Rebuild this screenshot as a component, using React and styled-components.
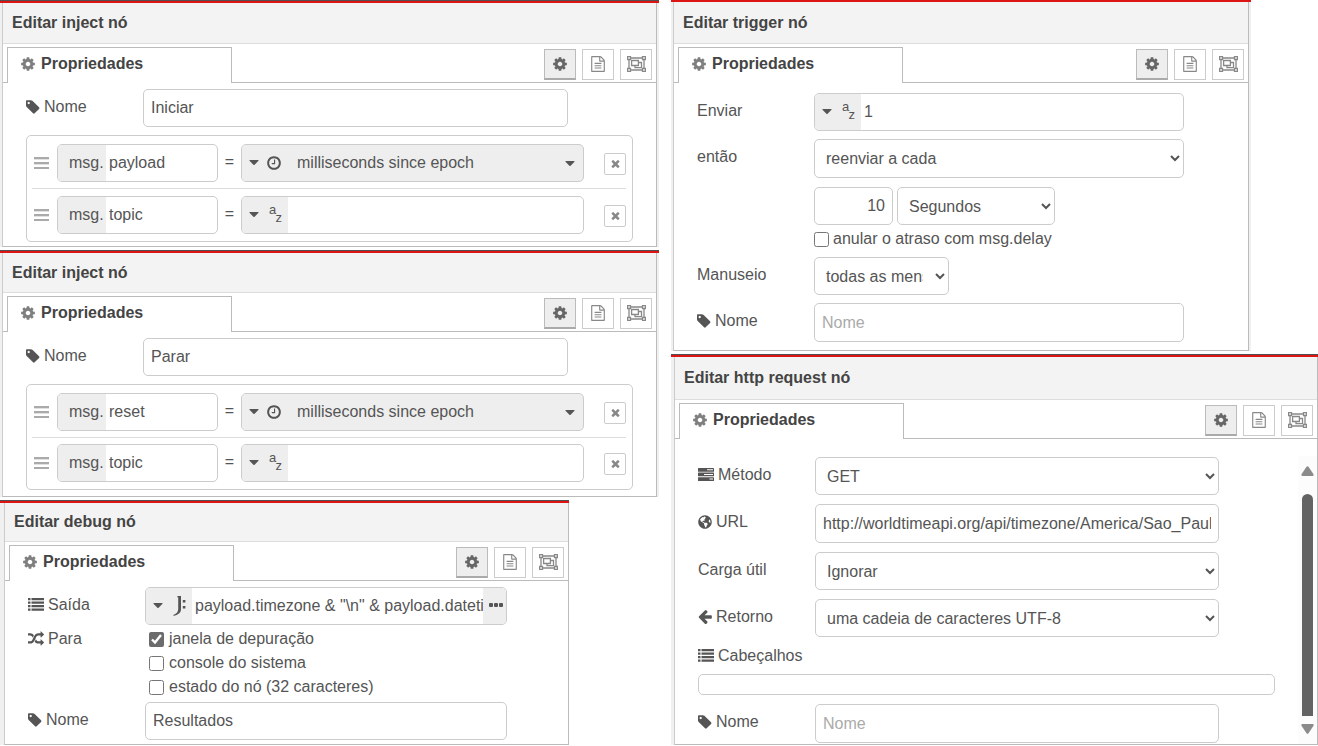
import React, { useId } from "react";
import styled, { createGlobalStyle } from "styled-components";
import { FaGlobeAmericas } from "react-icons/fa";

const GlobalStyle = createGlobalStyle`
  *, *::before, *::after { box-sizing: border-box; }
  body {
    margin: 0;
    background: #fff;
    color: #555;
    font: 16px/20px "Liberation Sans", Arial, sans-serif;
  }
  svg { display: block; flex: none; fill: currentColor; }
  button, input, select { font: inherit; color: inherit; }
`;

/* ---------- icons ---------- */

const GearIcon = () => (
  <svg width="14" height="16" viewBox="128 0 1536 1792" aria-hidden="true">
    <path d="M1152 896q0-106-75-181t-181-75-181 75-75 181 75 181 181 75 181-75 75-181zm512-109v222q0 12-8 23t-20 13l-185 28q-19 54-39 91 35 50 107 138 10 12 10 25t-9 23q-27 37-99 108t-94 71q-12 0-26-9l-138-108q-44 23-91 38-16 136-29 186-7 28-36 28h-222q-14 0-24.500-8.500t-11.500-21.500l-28-184q-49-16-90-37l-141 107q-10 9-25 9-14 0-25-11-126-114-165-168-7-10-7-23 0-12 8-23 15-21 51-66.500t54-70.500q-27-50-41-99l-183-27q-13-2-21-12.500t-8-23.500v-222q0-12 8-23t19-13l186-28q14-46 39-92-40-57-107-138-10-12-10-24 0-10 9-23 26-36 98.500-107.500t94.500-71.500q13 0 26 10l138 107q44-23 91-38 16-136 29-186 7-28 36-28h222q14 0 24.500 8.500t11.500 21.500l28 184q49 16 90 37l142-107q9-9 24-9 13 0 25 10 129 119 165 170 7 8 7 22 0 12-8 23-15 21-51 66.500t-54 70.500q26 50 41 98l183 28q13 2 21 12.500t8 23.500z" />
  </svg>
);

const TagIcon = () => (
  <svg width="14" height="16" viewBox="32 0 1536 1792" aria-hidden="true">
    <path d="M448 448q0-53-37.500-90.500t-90.500-37.500-90.500 37.500-37.500 90.500 37.500 90.500 90.500 37.500 90.500-37.500 37.500-90.500zm1067 576q0 53-37 90l-491 492q-39 37-91 37-53 0-90-37l-715-716q-38-37-64.500-101t-26.500-117v-416q0-52 38-90t90-38h416q53 0 117 26.500t102 64.500l715 714q37 39 37 91z" />
  </svg>
);

const FileIcon = () => (
  <svg width="16" height="16" viewBox="0 0 1792 1792" aria-hidden="true">
    <path d="M1596 380q28 28 48 76t20 88v1152q0 40-28 68t-68 28h-1344q-40 0-68-28t-28-68v-1600q0-40 28-68t68-28h896q40 0 88 20t76 48zm-444-244v376h376q-10-29-22-41l-313-313q-12-12-41-22zm384 1528v-1024h-416q-40 0-68-28t-28-68v-416h-768v1536h1280zm-1024-864q0-14 9-23t23-9h704q14 0 23 9t9 23v64q0 14-9 23t-23 9h-704q-14 0-23-9t-9-23v-64zm736 224q14 0 23 9t9 23v64q0 14-9 23t-23 9h-704q-14 0-23-9t-9-23v-64q0-14 9-23t23-9h704zm0 256q14 0 23 9t9 23v64q0 14-9 23t-23 9h-704q-14 0-23-9t-9-23v-64q0-14 9-23t23-9h704z" />
  </svg>
);

const GroupIcon = () => (
  <svg width="19" height="16" viewBox="0 0 19 16" aria-hidden="true">
    <g fill="none" stroke="currentColor" strokeWidth="1.300">
      <path d="M4 2h11M4 14h11M2 4v8M17 4v8" />
      <path d="M.6.6h2.900v2.900H.6zM15.500.6h2.900v2.900h-2.900zM.6 12.500h2.900v2.900H.6zM15.500 12.500h2.900v2.900h-2.900z" />
      <path d="M4.600 4.500h6.800v5H4.600zM11.500 6.500h3v5.200H8V9.600" />
    </g>
  </svg>
);

const ClockIcon = () => (
  <svg width="16" height="16" viewBox="0 0 1792 1792" aria-hidden="true">
    <path d="M1024 544v448q0 14-9 23t-23 9h-320q-14 0-23-9t-9-23v-64q0-14 9-23t23-9h224v-352q0-14 9-23t23-9h64q14 0 23 9t9 23zm416 352q0-148-73-273t-198-198-273-73-273 73-198 198-73 273 73 273 198 198 273 73 273-73 198-198 73-273zm224 0q0 209-103 385.500t-279.500 279.500-385.500 103-385.500-103-279.500-279.500-103-385.500 103-385.500 279.500-279.500 385.500-103 385.500 103 279.500 279.500 103 385.500z" />
  </svg>
);

const ArrowLeftIcon = () => (
  <svg width="14" height="16" viewBox="128 64 1536 1792" aria-hidden="true">
    <path d="M1664 896v128q0 53-32.500 90.500t-84.500 37.500h-704l293 294q38 36 38 90t-38 90l-75 76q-37 37-90 37-52 0-91-37l-651-652q-37-37-37-90 0-52 37-91l651-650q38-38 91-38 52 0 90 38l75 74q38 38 38 91t-38 91l-293 293h704q52 0 84.500 37.500t32.500 90.500z" />
  </svg>
);

const RandomIcon = () => (
  <svg width="16" height="16" viewBox="0 0 1792 1792" aria-hidden="true">
    <path d="M666 481q-60 92-137 273-22-45-37-72.500t-40.500-63.500-51-56.500-63-35-81.500-14.500h-224q-14 0-23-9t-9-23v-192q0-14 9-23t23-9h224q250 0 410 225zm1126 799q0 14-9 23l-320 320q-9 9-23 9-13 0-22.500-9.500t-9.500-22.500v-192q-32 0-85 .5t-81 1-73-1-71-5-64-10.500-63-18.500-58-28.500-59-40-55-53.500-56-69.500q59-93 136-273 22 45 37 72.500t40.500 63.500 51 56.500 63 35 81.500 14.500h256v-192q0-14 9-23t23-9q12 0 24 10l319 319q9 9 9 23zm0-896q0 14-9 23l-320 320q-9 9-23 9-13 0-22.500-9.500t-9.500-22.500v-192h-256q-48 0-87 15t-69 45-51 61.500-45 77.500q-32 62-78 171-29 66-49.500 111t-54 105-64 100-74 83-90 68.500-106.500 42-128 16.500h-224q-14 0-23-9t-9-23v-192q0-14 9-23t23-9h224q48 0 87-15t69-45 51-61.500 45-77.500q32-62 78-171 29-66 49.500-111t54-105 64-100 74-83 90-68.500 106.500-42 128-16.500h256v-192q0-14 9-23t23-9q12 0 24 10l319 319q9 9 9 23z" />
  </svg>
);

const ListIcon = () => (
  <svg width="16" height="16" viewBox="0 0 16 16" aria-hidden="true">
    <path d="M0 1h2.500v2.200H0zM0 4.500h2.500v2.200H0zM0 8h2.500v2.200H0zM0 11.500h2.500v2.200H0zM3.500 1H16v2.200H3.500zM3.500 4.500H16v2.200H3.500zM3.500 8H16v2.200H3.500zM3.500 11.500H16v2.200H3.500z" />
  </svg>
);

const TasksIcon = () => (
  <svg width="16" height="16" viewBox="0 0 16 16" aria-hidden="true">
    <path fillRule="evenodd" d="M.5 1h15q.5 0 .5.500v2.700q0 .5-.5.500H.5Q0 4.700 0 4.200V1.500Q0 1 .5 1zM9 2.300h6v1H9zM.5 5.600h15q.5 0 .5.500v2.700q0 .5-.5.500H.5Q0 9.300 0 8.800V6.100q0-.5.5-.5zM6 7h9v1H6zM.5 10.200h15q.5 0 .5.500v2.700q0 .5-.5.500H.5q-.5 0-.5-.5v-2.700q0-.5.5-.5zM11.500 11.600H15v1h-3.500z" />
  </svg>
);

const BarsIcon = () => (
  <svg width="15" height="12" viewBox="0 0 15 12" aria-hidden="true">
    <path d="M0 0h15v2H0zM0 5h15v2H0zM0 10h15v2H0z" />
    <path opacity=".35" d="M0 2h15v1H0zM0 7h15v1H0z" />
  </svg>
);

const CloseIcon = () => (
  <svg width="9" height="9" viewBox="220 350 1350 1350" aria-hidden="true">
    <path d="M1490 1322q0 40-28 68l-136 136q-28 28-68 28t-68-28l-294-294-294 294q-28 28-68 28t-68-28l-136-136q-28-28-28-68t28-68l294-294-294-294q-28-28-28-68t28-68l136-136q28-28 68-28t68 28l294 294 294-294q28-28 68-28t68 28l136 136q28 28 28 68t-28 68l-294 294 294 294q28 28 28 68z" />
  </svg>
);

const CaretIcon = () => (
  <svg width="10" height="6" viewBox="0 0 10 6" aria-hidden="true">
    <path d="M.8 0h8.400q.6.200.3.800L5.600 4.700q-.6.600-1.200 0L.5.800Q.2.200.8 0z" />
  </svg>
);

const DotsIcon = () => (
  <svg width="14" height="4" viewBox="0 0 14 4" aria-hidden="true">
    <rect width="4" height="4" rx="1" />
    <rect x="5" width="4" height="4" rx="1" />
    <rect x="10" width="4" height="4" rx="1" />
  </svg>
);

const ExpressionIcon = () => (
  <svg width="13" height="20" viewBox="0 0 13 20" aria-hidden="true">
    <path d="M4.500 0H8v13c0 4-3 6-7.500 6.800L.2 19C3.500 18 5.200 16 5.200 13V1.400l-.9-.2z" />
    <path d="M9.800 4h2.600v2.600H9.800zM9.800 10h2.600v2.600H9.800z" />
  </svg>
);

/* ---------- page and panel frame ---------- */

const Page = styled.main`
  display: flex;
  align-items: flex-start;
`;

const LeftColumn = styled.div`
  flex: none;
  width: 50%;
  display: flex;
  flex-direction: column;
  gap: 3px;
`;

const RightColumn = styled(LeftColumn)`
  flex: 1;
  width: auto;
  margin-left: 12px;
`;

const Panel = styled.section`
  width: calc(100% - ${(p) => p.$inset || 0}px);
  border-top: ${(p) => (p.$capped ? 1 : 0)}px solid #505050;
`;

const PanelShade = styled.div`
  padding: 0 ${(p) => p.$right}px 0 ${(p) => p.$left}px;
  border-top: 2px solid #dc1414;
  background: #f0f0f0;
`;

const PanelFrame = styled.div`
  border: 1px solid #bbb;
  border-top: 0;
  border-left-color: #ccc;
  background: #fff;
`;

const PanelTitle = styled.h2`
  display: flex;
  align-items: center;
  height: ${(p) => p.$height}px;
  margin: 0;
  padding-left: 9px;
  border-bottom: 1px solid #ddd;
  background: #f3f3f3;
  color: #444;
  font-size: 16px;
`;

const TabBar = styled.div`
  display: flex;
  align-items: flex-end;
  justify-content: space-between;
  height: 39px;
  padding: 0 4px;
  background: linear-gradient(#bbb, #bbb) bottom / 100% 1px no-repeat;
`;

const Tab = styled.button`
  display: flex;
  align-items: center;
  gap: 6px;
  width: 225px;
  height: 36px;
  padding: 0 13px 4px;
  border: 1px solid #bbb;
  border-bottom: 0;
  background: #fff;
  color: #444;
  font-weight: bold;
  svg { color: #7f7f7f; }
`;

const TabTools = styled.div`
  display: flex;
  gap: 6px;
  padding-bottom: 3px;
`;

const ToolButton = styled.button`
  display: grid;
  place-items: center;
  width: 32px;
  height: 31px;
  padding: 0 0 ${(p) => (p.$active ? 0 : 2)}px;
  border: 1px solid ${(p) => (p.$active ? "#bbb" : "#ccc")};
  border-bottom: ${(p) => (p.$active ? "2px solid #aaa" : "1px solid #ccc")};
  background: ${(p) => (p.$active ? "#eee" : "#fff")};
  color: ${(p) => (p.$active ? "#666" : "#888")};
`;

/* ---------- form parts ---------- */

const FormArea = styled.div`
  display: flex;
`;

const Form = styled.form`
  flex: 1;
  min-width: 0;
  padding: ${(p) => p.$top}px 23px ${(p) => p.$bottom}px;
`;

const FormRow = styled.div`
  display: flex;
  align-items: flex-start;
  margin-top: ${(p) => p.$gap || 0}px;
`;

const FieldLabel = styled.label`
  flex: none;
  display: flex;
  align-items: center;
  gap: 4px;
  width: 117px;
  height: ${(p) => p.$height || 36}px;
`;

const TextInput = styled.input`
  width: ${(p) => p.$width || "70%"};
  height: ${(p) => (p.$tall ? 39 : 38)}px;
  padding: 0 7px;
  border: 1px solid #ccc;
  border-radius: 5px;
  background: #fff;
  outline: 0;
  text-align: ${(p) => p.$align || "left"};
  &::placeholder { color: #aaa; }
`;

const SelectInput = styled.select`
  width: ${(p) => p.$width || "70%"};
  height: ${(p) => (p.$tall ? 39 : 38)}px;
  padding: 0 9px 0 7px;
  border: 1px solid #ccc;
  border-radius: 5px;
  background-color: #fff;
`;

const IntervalFields = styled.div`
  display: flex;
  gap: 4px;
`;

const TypedBox = styled.div`
  display: flex;
  align-items: stretch;
  flex: ${(p) => p.$flex || "none"};
  width: ${(p) => p.$width || "auto"};
  min-width: 0;
  height: 38px;
  overflow: hidden;
  border: 1px solid #ccc;
  border-radius: 5px;
  background: ${(p) => (p.$filled ? "#eee" : "#fff")};
`;

const TypeButton = styled.button`
  flex: none;
  display: flex;
  align-items: center;
  gap: 10px;
  width: 46px;
  padding: 0 0 0 7px;
  border: 0;
  background: #eee;
`;

const ClockType = styled(TypeButton)`
  gap: 7px;
`;

const ValueInput = styled.input`
  flex: 1;
  min-width: 0;
  padding: 0 0 0 3px;
  border: 0;
  outline: 0;
  background: transparent;
`;

const OptionButton = styled.button`
  flex: 1;
  display: flex;
  align-items: center;
  justify-content: space-between;
  padding: 0 8px 0 9px;
  border: 0;
  background: transparent;
  svg { margin-top: 2px; }
`;

const ExpandButton = styled.button`
  display: grid;
  place-items: center;
  width: 23px;
  padding: 0 0 3px 3px;
  border: 0;
  background: #eee;
`;

const Prefix = styled.span`
  width: 48px;
  padding-left: 11px;
  background: #eee;
  line-height: 35px;
`;

const StringMark = styled.span`
  display: flex;
  flex-direction: column;
  width: 13px;
  padding-bottom: 2px;
  font-size: 13px;
  line-height: 8px;
  text-align: left;
  span:last-child { align-self: flex-end; }
`;

const CheckStack = styled.div`
  padding-left: ${(p) => p.$indent || 0}px;
`;

const CheckLabel = styled.label`
  display: flex;
  align-items: center;
  gap: ${(p) => p.$gap || 5}px;
  height: 24px;
  input {
    width: 15px;
    height: 15px;
    margin: 0;
    accent-color: #6b6b6b;
  }
`;

/* ---------- property list ---------- */

const PropertyRow = styled.li`
  display: flex;
  align-items: center;
  padding: 6px 0 6px 2px;
`;

const PropertyList = styled.ul`
  margin: 8px 0 0;
  padding: 2px 6px 1px 5px;
  border: 1px solid #ccc;
  border-radius: 5px;
  list-style: none;
  ${PropertyRow}:last-child {
    padding-top: ${(p) => p.$divide}px;
    border-top: 1px solid #ddd;
  }
`;

const DragHandle = styled.span`
  width: 23px;
  color: #aaa;
`;

const Equals = styled.span`
  width: 23px;
  padding-bottom: 2px;
  text-align: center;
`;

const RemoveButton = styled.button`
  display: grid;
  place-items: center;
  width: 22px;
  height: 22px;
  margin: 2px 0 0 20px;
  padding: 0;
  border: 1px solid #ccc;
  border-radius: 2px;
  background: #fff;
  color: #888;
`;

const HeaderList = styled.div`
  height: 21px;
  margin-top: 8px;
  border: 1px solid #ccc;
  border-radius: 5px;
`;

/* ---------- scroll bar ---------- */

const ScrollTrack = styled.div`
  display: flex;
  flex-direction: column;
  align-items: center;
  width: 19px;
  margin-top: 17px;
  padding: 10px 0;
  background: #fcfcfc;
  color: #8b8b8b;
`;

const ScrollThumb = styled.div`
  flex: 1;
  width: 11px;
  margin: 18px 0 8px;
  border-radius: 6px 6px 0 0;
  background: #636363;
`;

/* ---------- composed parts ---------- */

function EditPanel({ title, titleHeight, inset, left = 2, right = 2, capped = true, children }) {
  return (
    <Panel $inset={inset} $capped={capped}>
      <PanelShade $left={left} $right={right}>
        <PanelFrame>
          <PanelTitle $height={titleHeight}>{title}</PanelTitle>
          <TabBar>
            <Tab type="button"><GearIcon />Propriedades</Tab>
            <TabTools>
              <ToolButton type="button" $active aria-label="Propriedades"><GearIcon /></ToolButton>
              <ToolButton type="button" aria-label="Descrição"><FileIcon /></ToolButton>
              <ToolButton type="button" aria-label="Aparência"><GroupIcon /></ToolButton>
            </TabTools>
          </TabBar>
          {children}
        </PanelFrame>
      </PanelShade>
    </Panel>
  );
}

function NameRow({ value = "", placeholder, gap, tall }) {
  const id = useId();
  return (
    <FormRow $gap={gap}>
      <FieldLabel htmlFor={id}><TagIcon />Nome</FieldLabel>
      <TextInput id={id} defaultValue={value} placeholder={placeholder} $tall={tall} />
    </FormRow>
  );
}

function SelectRow({ icon, label, option, gap, tall, width }) {
  const id = useId();
  return (
    <FormRow $gap={gap}>
      <FieldLabel htmlFor={id}>{icon}{label}</FieldLabel>
      <SelectInput id={id} $tall={tall} $width={width}>
        <option>{option}</option>
      </SelectInput>
    </FormRow>
  );
}

function StringType() {
  return (
    <TypeButton type="button" aria-label="Tipo: texto">
      <CaretIcon />
      <StringMark><span>a</span><span>z</span></StringMark>
    </TypeButton>
  );
}

function Property({ name, timestamp }) {
  return (
    <PropertyRow>
      <DragHandle><BarsIcon /></DragHandle>
      <TypedBox $width="161px">
        <Prefix>msg.</Prefix>
        <ValueInput aria-label="Propriedade" defaultValue={name} />
      </TypedBox>
      <Equals>=</Equals>
      <TypedBox $flex="1" $filled={timestamp}>
        {timestamp ? (
          <>
            <ClockType type="button" aria-label="Tipo: data"><CaretIcon /><ClockIcon /></ClockType>
            <OptionButton type="button">milliseconds since epoch<CaretIcon /></OptionButton>
          </>
        ) : (
          <>
            <StringType />
            <ValueInput aria-label="Valor" />
          </>
        )}
      </TypedBox>
      <RemoveButton type="button" aria-label="Remover"><CloseIcon /></RemoveButton>
    </PropertyRow>
  );
}

function InjectPanel({ name, property, titleHeight, divide, bottom }) {
  return (
    <EditPanel title="Editar inject nó" titleHeight={titleHeight}>
      <Form $top={6} $bottom={bottom}>
        <NameRow value={name} />
        <PropertyList $divide={divide}>
          <Property name={property} timestamp />
          <Property name="topic" />
        </PropertyList>
      </Form>
    </EditPanel>
  );
}

function DebugPanel() {
  return (
    <EditPanel title="Editar debug nó" titleHeight={39} inset={90} left={4} right={0}>
      <Form $top={6} $bottom={4}>
        <FormRow>
          <FieldLabel htmlFor="output"><ListIcon />Saída</FieldLabel>
          <TypedBox $width="70%">
            <TypeButton type="button" aria-label="Tipo: expressão"><CaretIcon /><ExpressionIcon /></TypeButton>
            <ValueInput id="output" defaultValue={'payload.timezone & "\\n" & payload.datetime'} />
            <ExpandButton type="button" aria-label="Expandir"><DotsIcon /></ExpandButton>
          </TypedBox>
        </FormRow>
        <FormRow $gap={2}>
          <FieldLabel as="span" $height={24}><RandomIcon />Para</FieldLabel>
          <CheckStack $indent={4}>
            <CheckLabel><input type="checkbox" defaultChecked />janela de depuração</CheckLabel>
            <CheckLabel><input type="checkbox" />console do sistema</CheckLabel>
            <CheckLabel><input type="checkbox" />estado do nó (32 caracteres)</CheckLabel>
          </CheckStack>
        </FormRow>
        <NameRow value="Resultados" gap={3} />
      </Form>
    </EditPanel>
  );
}

function TriggerPanel() {
  return (
    <EditPanel title="Editar trigger nó" titleHeight={42} inset={67} capped={false}>
      <Form $top={10} $bottom={8}>
        <FormRow>
          <FieldLabel htmlFor="send">Enviar</FieldLabel>
          <TypedBox $width="70%">
            <StringType />
            <ValueInput id="send" defaultValue="1" />
          </TypedBox>
        </FormRow>
        <SelectRow label="então" option="reenviar a cada" gap={8} tall />
        <FormRow $gap={9}>
          <FieldLabel as="span" />
          <IntervalFields>
            <TextInput aria-label="Intervalo" defaultValue="10" $width="79px" $align="right" />
            <SelectInput aria-label="Unidade" $width="158px"><option>Segundos</option></SelectInput>
          </IntervalFields>
        </FormRow>
        <FormRow $gap={2}>
          <FieldLabel as="span" $height={24} />
          <CheckStack>
            <CheckLabel $gap={4}><input type="checkbox" />anular o atraso com msg.delay</CheckLabel>
          </CheckStack>
        </FormRow>
        <SelectRow label="Manuseio" option="todas as mensagens" gap={6} width="135px" />
        <NameRow placeholder="Nome" gap={8} tall />
      </Form>
    </EditPanel>
  );
}

function RequestPanel() {
  return (
    <EditPanel title="Editar http request nó" titleHeight={43} left={3} right={0}>
      <FormArea>
        <Form $top={18} $bottom={1}>
          <SelectRow icon={<TasksIcon />} label="Método" option="GET" />
          <FormRow $gap={9}>
            <FieldLabel htmlFor="url"><FaGlobeAmericas size={14} />URL</FieldLabel>
            <TextInput id="url" $tall defaultValue="http://worldtimeapi.org/api/timezone/America/Sao_Paulo" />
          </FormRow>
          <SelectRow label="Carga útil" option="Ignorar" gap={9} />
          <SelectRow icon={<ArrowLeftIcon />} label="Retorno" option="uma cadeia de caracteres UTF-8" gap={9} />
          <FormRow $gap={9}>
            <FieldLabel as="span" $height={20}><ListIcon />Cabeçalhos</FieldLabel>
          </FormRow>
          <HeaderList />
          <NameRow placeholder="Nome" gap={9} tall />
        </Form>
        <ScrollTrack aria-hidden="true">
          <svg width="13" height="10" viewBox="0 0 13 10"><path d="M5.500.8q1-1.200 2 0l5 7.500q.6 1.500-.8 1.700H1.300Q-.1 9.800.5 8.300z" /></svg>
          <ScrollThumb />
          <svg width="13" height="10" viewBox="0 0 13 10"><path d="M5.500 9.200q1 1.200 2 0l5-7.500Q13.100.2 11.700 0H1.300Q-.1.200.5 1.700z" /></svg>
        </ScrollTrack>
      </FormArea>
    </EditPanel>
  );
}

export default function App() {
  return (
    <>
      <GlobalStyle />
      <Page>
        <LeftColumn>
          <InjectPanel name="Iniciar" property="payload" titleHeight={41} divide={7} bottom={4} />
          <InjectPanel name="Parar" property="reset" titleHeight={40} divide={6} bottom={6} />
          <DebugPanel />
        </LeftColumn>
        <RightColumn>
          <TriggerPanel />
          <RequestPanel />
        </RightColumn>
      </Page>
    </>
  );
}
